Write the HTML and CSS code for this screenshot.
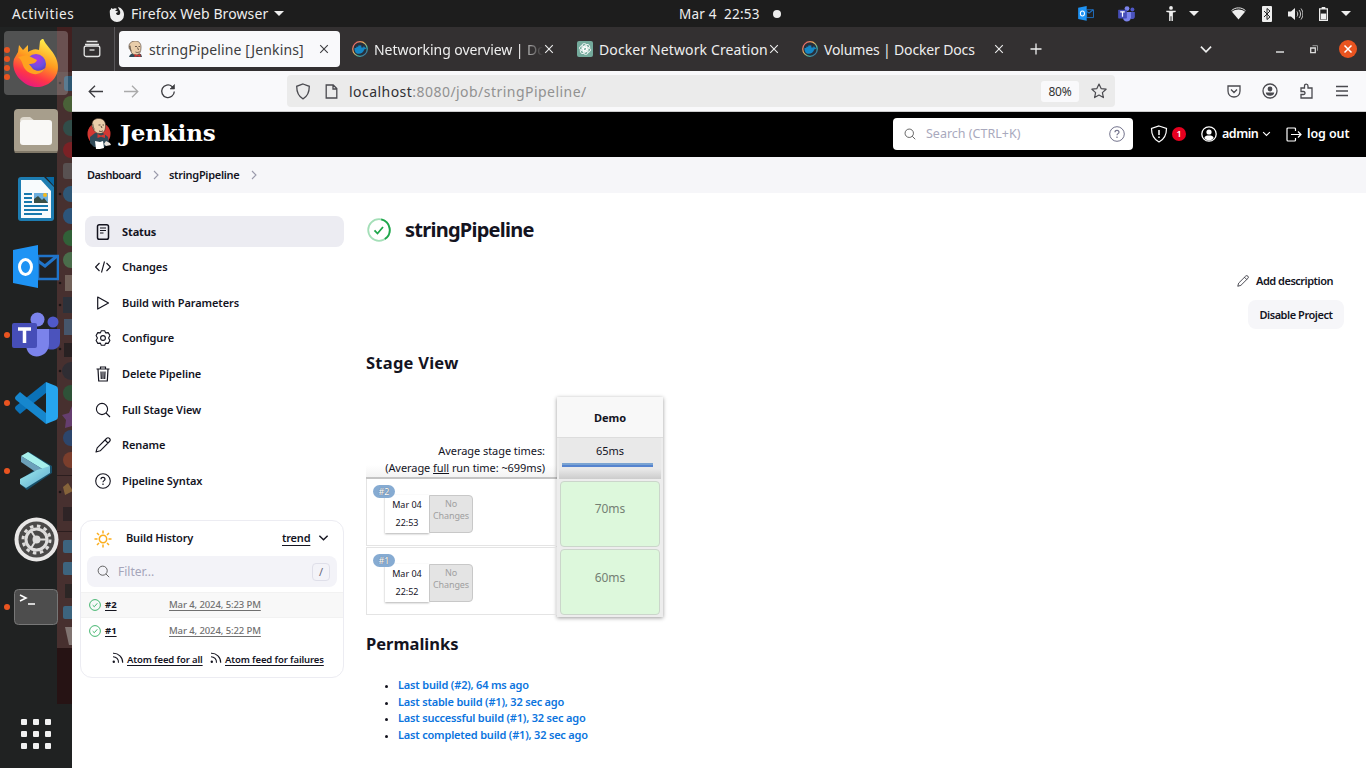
FILE: index.html
```html
<!DOCTYPE html>
<html lang="en">
<head>
<meta charset="utf-8">
<title>stringPipeline [Jenkins]</title>
<link rel="stylesheet" href="styles.css">
</head>
<body>
<svg class="defs" width="0" height="0">
  <defs>
    <linearGradient id="fox" x1=".7" y1="0" x2=".3" y2="1"><stop offset="0" stop-color="#fff44f"/><stop offset=".45" stop-color="#ff9a1f"/><stop offset=".75" stop-color="#ff3647"/><stop offset="1" stop-color="#e31587"/></linearGradient>
    <radialGradient id="globe" cx=".55" cy=".25" r=".8"><stop offset="0" stop-color="#b833e1"/><stop offset=".5" stop-color="#6d4fe0"/><stop offset="1" stop-color="#4a2fa8"/></radialGradient>
    <linearGradient id="ring" x1="0" y1="0" x2="1" y2="1"><stop offset="0" stop-color="#e0446c"/><stop offset=".4" stop-color="#f0b45c"/><stop offset=".7" stop-color="#3fb6a8"/><stop offset="1" stop-color="#3a4aa0"/></linearGradient>
    <linearGradient id="arrow" x1="0" y1="0" x2="1" y2="1"><stop offset="0" stop-color="#a5f0ee"/><stop offset="1" stop-color="#5ba7cf"/></linearGradient>
    <symbol id="docker" viewBox="0 0 16 16"><circle cx="8" cy="8" r="7.3" fill="#27303c" stroke="url(#ring)" stroke-width="1.2"/><path d="M2.500 7h1.800V5.800h2V4.500h3v2h1.500c.5 0 .8-.6.7-1.300 1 .4 1.300 1 1.400 1.500.7 0 1.200 0 1.600.3-.4.9-1.200 1.200-2.100 1.200C11.300 11.500 9.300 12.800 6.700 12.800 4 12.800 2.400 11 2.500 7z" fill="#1488c6"/></symbol>
    <symbol id="close" viewBox="0 0 10 10"><path d="M1.200 1.200l7.600 7.600M8.800 1.200L1.200 8.800" stroke="currentColor" fill="none" stroke-width="1.100"/></symbol>
    <symbol id="down" viewBox="0 0 12 8"><path d="M1.500 1.500L6 6l4.500-4.500" stroke="currentColor" fill="none" stroke-width="1.500"/></symbol>
    <symbol id="tri" viewBox="0 0 10 5"><path d="M0 0h10L5 5z" fill="currentColor"/></symbol>
    <symbol id="search" viewBox="0 0 16 16"><circle cx="7" cy="7" r="5.600" stroke="currentColor" fill="none"/><path d="M11 11l4 4" stroke="currentColor"/></symbol>
    <symbol id="pencil" viewBox="0 0 16 16"><path d="M1 15l1.200-4.200L11.500 1.500a1.900 1.900 0 0 1 3 3L5.200 13.800zM10 3l3 3" stroke="currentColor" fill="none" stroke-linejoin="round"/></symbol>
    <symbol id="help" viewBox="0 0 16 16"><circle cx="8" cy="8" r="7.300" stroke="currentColor" fill="none"/><path d="M6 6.300C6 5 6.900 4.300 8 4.300s2 .8 2 1.900c0 1.400-2 1.500-2 3M8 10.600V12" stroke="currentColor" fill="none" stroke-width="1.200"/></symbol>
    <symbol id="user" viewBox="0 0 16 16"><circle cx="8" cy="8" r="7.200" stroke="currentColor" fill="none" stroke-width="1.300"/><circle cx="8" cy="6" r="2.600" fill="currentColor"/><path d="M3.300 12c.6-1.900 2-2.500 4.700-2.500s4.100.6 4.700 2.500c-1.200 1.700-2.800 2.400-4.700 2.400S4.500 13.700 3.300 12z" fill="currentColor"/></symbol>
    <symbol id="ok" viewBox="0 0 12 12"><circle cx="6" cy="6" r="5.400" stroke="#2fae60" fill="none" stroke-width=".9"/><path d="M3.700 6.200l1.600 1.500 3-3.400" stroke="#2fae60" fill="none" stroke-width=".9"/></symbol>
    <symbol id="rss" viewBox="0 0 12 12"><circle cx="1.800" cy="9.700" r="1.200" fill="#14141f"/><path d="M1 4.700a5.500 5.500 0 0 1 5.500 6M1 1.200a9.200 9.200 0 0 1 9.700 9.500" stroke="#14141f" fill="none" stroke-width="1.100"/></symbol>
    <symbol id="outlook" viewBox="0 0 46 44"><path d="M25 11h20v23H25z" fill="#202122" stroke="#2074c9" stroke-width="2.600"/><path d="M25 16l7 5 12-10" stroke="#2074c9" fill="none" stroke-width="3"/><path d="M0 5l25-5v43L0 38z" fill="#1e93f4"/><ellipse cx="12.500" cy="22" rx="6" ry="7.500" fill="none" stroke="#fff" stroke-width="3"/></symbol>
    <symbol id="teams" viewBox="0 0 48 46"><circle cx="41" cy="10" r="5.500" fill="#5059c9"/><path d="M36 17h12v13c0 6-6 9-12 7z" fill="#4b53bc"/><circle cx="25.500" cy="7.500" r="7" fill="#7b83eb"/><path d="M14 17h23v15c0 15-23 18-23 0z" fill="#7b83eb"/><rect y="11" width="25" height="25" rx="2" fill="#464eb8"/><path d="M6 17h13M12.500 17v14" stroke="#fff" stroke-width="3.500"/></symbol>
    <symbol id="face" viewBox="0 0 16 16"><path d="M2 16c1-3 3-4 5-4l7 1 1 3z" fill="#304a58"/><path d="M2 5c0-3 3-5 6.500-5C12 0 14 2.500 14 6c0 5-1.500 8-5 8-3 0-5-2-5.500-5C2 8 2 7 2 5z" fill="#e9cdaa" stroke="#4b3a30" stroke-width=".6"/><path d="M2 5l1.500-.5L4 8l1 3-2-2z" fill="#6d5e50"/><path d="M8 5.500h2M11.500 5.500h1.500M10.500 6.500l1 2.500M8.500 11c1.500.8 3 .5 4-.3" stroke="#4b3a30" fill="none" stroke-width=".8"/><path d="M7.500 13l3 1.300 3-1.300v3l-3-.8-3 .8z" fill="#d33833"/></symbol>
    <symbol id="butler" viewBox="0 0 26 32"><circle cx="13" cy="16" r="11.500" fill="#d33833"/><path d="M4 19l5-4h8l5 4 1 7-5 3H8l-4-4z" fill="#304a58"/><path d="M10 31l-1-8 5 1 3-1 1 7-4 1z" fill="#fff"/><path d="M6 7c0-5 3-6.500 7-6.500 5 0 7 4 6.500 8 0 4-2 7-5.500 7-4 0-6-2-7-5.500C6 9 6 8 6 7z" fill="#e9cdaa" stroke="#3c2b22" stroke-width=".6"/><path d="M6 6l1.200-.5.8 4 1.500 3L7 10z" fill="#7c6d5c"/><path d="M12.500 7h2m2 0h1.500m-3 1l1 2m-3 3c1.500.8 3 .6 4-.3" stroke="#3c2b22" fill="none" stroke-width=".8"/><path d="M11.500 16l3.500 1.500 4-1.500v4l-4-1.200-3.500 1.200z" fill="#d33833"/><path d="M18 26l2-3 4 2 1 2-5 1z" fill="#e9e2dc"/></symbol>
  </defs>
</svg>

<header class="topbar">
  <span class="activities">Activities</span>
  <svg class="tb-fox" viewBox="0 0 16 16"><path d="M1 4c1 0 1-1 1-2l2 1c1-1 3-1 4 0L6 5c2 0 3 0 3 1L7 7c0 2 3 3 4 1 1-3-1-4-2-7 4 1 6 4 6 8a7 7 0 0 1-14 0c0-2-.5-3 0-5z" fill="#eee"/></svg>
  <span class="appname">Firefox Web Browser</span>
  <svg class="tb-tri"><use href="#tri"/></svg>
  <span class="clock">Mar 4&nbsp; 22:53</span><i class="notif"></i>
  <div class="tray">
    <svg class="t-out"><use href="#outlook"/></svg>
    <svg class="t-teams"><use href="#teams"/></svg>
    <svg class="t-acc" viewBox="0 0 12 16"><circle cx="6" cy="2" r="2"/><path d="M1 5h10v1.500L8 7v9H6.500v-5h-1v5H4V7L1 6.500z"/></svg>
    <svg class="t-tri"><use href="#tri"/></svg>
    <svg class="t-wifi" viewBox="0 0 16 13"><path d="M8 13L1 4.500c4-3 10-3 14 0z"/><path d="M.5 3.500c4-4 11-4 15 0" stroke="#eee" fill="none"/></svg>
    <svg class="t-bt" viewBox="0 0 10 16"><rect width="10" height="16" rx="1"/><path d="M2 5l6 6-3 2.500v-11L8 5l-6 6" stroke="#222" fill="none"/></svg>
    <svg class="t-vol" viewBox="0 0 15 14"><path d="M0 4.500h3L7 1v12L3 9.500H0z"/><path d="M9 4.500c1 1.500 1 3.500 0 5M11 3c2 2.500 2 5.500 0 8M13 1.500c2.500 3.500 2.500 7.500 0 11" stroke="#ccc" fill="none"/></svg>
    <svg class="t-bat" viewBox="0 0 10 16"><path d="M.7 2.200h8.600v13H.7zM3 1h4" fill="none" stroke="#eee" stroke-width="1.400"/><path d="M2 7.500h6V14H2z"/></svg>
    <svg class="t-tri2"><use href="#tri"/></svg>
  </div>
</header>

<div class="desktop">
  <nav class="dock">
    <svg class="strip" viewBox="0 0 15 677"><rect width="15" height="677" fill="#47302f"/><rect width="15" height="45" fill="#412020"/><rect y="621" width="15" height="56" fill="#261314"/>
      <g opacity=".7"><rect x="7" y="49" width="12" height="15" rx="3" fill="#23688f"/><circle cx="14" cy="77" r="8" fill="#4b773c"/><circle cx="14" cy="101" r="8" fill="#285a55"/><circle cx="14" cy="123" r="8" fill="#921c22"/><rect x="6" y="136" width="14" height="16" rx="3" fill="#606060"/><circle cx="14" cy="167" r="8" fill="#256894"/><circle cx="14" cy="189" r="8" fill="#22659c"/><circle cx="14" cy="211" r="8" fill="#28763d"/><circle cx="14" cy="233" r="8" fill="#4c8858"/><rect x="8" y="248" width="12" height="16" fill="#83776b"/><rect x="6" y="270" width="14" height="16" fill="#223240"/><rect x="7" y="292" width="14" height="16" fill="#466785"/><rect x="7" y="316" width="14" height="14" fill="#1c1c1d"/><circle cx="14" cy="344" r="9" fill="#252c36"/><circle cx="14" cy="366" r="8" fill="#24613d"/><path d="M5 388l7-2 3-7v20l-7 2 1-8z" fill="#73458b"/><circle cx="14" cy="411" r="8" fill="#235087"/><circle cx="14" cy="433" r="8" fill="#91442c"/><path d="M6 460l5-4 5 8-8 4z" fill="#a27b40"/><rect x="6" y="480" width="14" height="14" fill="#241f23"/><rect x="6" y="513" width="14" height="13" rx="2" fill="#397aa0"/><rect x="6" y="535" width="14" height="13" rx="2" fill="#397aa0"/><rect x="8" y="557" width="12" height="14" fill="#222"/><rect x="6" y="579" width="14" height="13" rx="2" fill="#397aa0"/><path d="M8 600h12v18h-8z" fill="#99918e"/></g>
      <path d="M0 504.500h15M0 448.500h15" stroke="#2b1d1e"/><g fill="#1b1516"><circle cx="3" cy="56" r="1.300"/><circle cx="3" cy="167" r="1.300"/><circle cx="3" cy="256" r="1.300"/><circle cx="3" cy="278" r="1.300"/><circle cx="3" cy="322" r="1.300"/><circle cx="3" cy="344" r="1.300"/><circle cx="3" cy="465" r="1.300"/></g></svg>
    <div class="app active"><span class="dots"><i></i><i></i><i></i><i></i></span><svg width="46" height="48" viewBox="0 0 46 48"><path d="M5 13l1-7 4 5 5-5v7c3-2 7-4 11-2l1-9 3-3c2 7 9 11 13 20 7 17-6 29-19 29S-3 34 1 20z" fill="url(#fox)"/><circle cx="23" cy="25" r="10" fill="url(#globe)"/><path d="M5 18l9-2 10 5c-1 3-4 4-8 4l4 5c4 3 9 2 12-1-3 8-15 8-20 1-3-4-2-8-7-12z" fill="#ffa21f"/></svg></div>
    <div class="app"><svg width="44" height="44"><rect width="44" height="44" rx="4" fill="#a79e8c"/><rect x=".5" y="42" width="43" height="2" rx="1" fill="#817969"/><path d="M6 12q0-4 4-4h6l5 4z" fill="#ded9ce"/><rect x="6" y="11" width="32" height="25" rx="3" fill="#f9f8f6"/></svg></div>
    <div class="app"><svg width="36" height="44"><path d="M3 0h23l10 10v31a3 3 0 0 1-3 3H3a3 3 0 0 1-3-3V3a3 3 0 0 1 3-3z" fill="#1d7db2"/><path d="M28 0h8v9z" fill="#0769a3"/><path d="M3 3h20l10 11v27H3z" fill="#f8fbfd"/><path d="M6 17h8M6 21h8M6 25h8M6 29h24M6 33h24M6 37h18" stroke="#1879ae" stroke-width="1.800"/><path d="M16 16h14v10H16z" fill="#6caede"/><path d="M16 26v-4l4-3 4 4 2-2 4 5z" fill="#394e45"/><circle cx="27" cy="18" r="2" fill="#f5b91d"/></svg></div>
    <div class="app"><svg width="46" height="44"><use href="#outlook"/></svg></div>
    <div class="app"><span class="dots"><i></i></span><svg width="48" height="46"><use href="#teams"/></svg></div>
    <div class="app"><span class="dots"><i></i></span><svg width="43" height="42" viewBox="0 0 43 42"><path d="M31 0v11L5 32l-4-4q-2-2 0-4z" fill="#0b72b8"/><path d="M5 10l26 21v11L1 18q-2-2 0-4z" fill="#1687ce"/><path d="M31 0l10 4q2 1 2 3v28q0 2-2 3l-10 4z" fill="#26a5ef"/></svg></div>
    <div class="app"><span class="dots"><i></i></span><svg width="34" height="38" viewBox="0 0 34 38"><path d="M3 5l7-5 23 14v7L8 38l-6-5v-6l15-10L3 10z" fill="#174f69"/><path d="M2 4l7-4 22 14-6 4z" fill="#a7f0ec"/><path d="M2 4l23 14-7 3L2 10z" fill="#6ca1ba"/><path d="M31 14v7L7 36l-6-4v-5l17-9z" fill="url(#arrow)"/></svg></div>
    <div class="app"><svg width="45" height="45" viewBox="0 0 45 45"><circle cx="22.500" cy="22.500" r="22" fill="#e9e8e7"/><circle cx="22.500" cy="22.500" r="18" fill="#4b4a49"/><circle cx="22.500" cy="22.500" r="10.500" fill="none" stroke="#dedddc" stroke-width="3"/><circle cx="22.500" cy="22.500" r="13.500" fill="none" stroke="#dedddc" stroke-width="3" stroke-dasharray="3.500 3.568"/><circle cx="22.500" cy="22.500" r="4" fill="#dedddc"/><path d="M24 22.500h9M21.500 24l-5 8M21.500 21l-5-8" stroke="#dedddc" stroke-width="2"/></svg></div>
    <div class="app"><span class="dots"><i></i></span><svg width="44" height="36"><rect x=".5" y=".5" width="43" height="35" rx="4" fill="#4d4d4d" stroke="#777"/><path d="M6 6l6 3-6 3M14 15h7" stroke="#fff" fill="none" stroke-width="1.600"/></svg></div>
    <div class="grid"><i></i><i></i><i></i><i></i><i></i><i></i><i></i><i></i><i></i></div>
  </nav>

  <div class="browser">
    <div class="tabs">
      <div class="archive"><svg width="18" height="18" viewBox="0 0 18 18" fill="none" stroke="#e5e5e5" stroke-width="1.300"><path d="M3.500 1.500h11M2 4.500h14" /><rect x="1.200" y="6" width="15.600" height="10.500" rx="2"/><path d="M6.500 10h5"/></svg></div>
      <div class="tab on"><svg class="fav"><use href="#face"/></svg><span class="tt t1">stringPipeline [Jenkins]</span><svg class="x"><use href="#close"/></svg></div>
      <div class="tab tab2"><svg class="fav"><use href="#docker"/></svg><span class="tt t2">Networking overview | Do</span><svg class="x"><use href="#close"/></svg></div>
      <div class="tab tab3"><svg class="fav" viewBox="0 0 16 16"><rect width="16" height="16" rx="2" fill="#74aa9c"/><g fill="none" stroke="#fff" stroke-width=".8"><rect x="5" y="2.500" width="4.500" height="7.500" rx="2.200"/><rect x="5" y="2.500" width="4.500" height="7.500" rx="2.200" transform="rotate(60 8 8)"/><rect x="5" y="2.500" width="4.500" height="7.500" rx="2.200" transform="rotate(120 8 8)"/><rect x="5" y="2.500" width="4.500" height="7.500" rx="2.200" transform="rotate(180 8 8)"/><rect x="5" y="2.500" width="4.500" height="7.500" rx="2.200" transform="rotate(240 8 8)"/><rect x="5" y="2.500" width="4.500" height="7.500" rx="2.200" transform="rotate(300 8 8)"/></g></svg><span class="tt t3">Docker Network Creation</span><svg class="x"><use href="#close"/></svg></div>
      <div class="tab tab4"><svg class="fav"><use href="#docker"/></svg><span class="tt t4">Volumes | Docker Docs</span><svg class="x"><use href="#close"/></svg></div>
      <svg class="plus" viewBox="0 0 12 12"><path d="M6 .5v11M.5 6h11" stroke="#eee" stroke-width="1.300"/></svg>
      <div class="win">
        <svg width="14" height="9"><use href="#down"/></svg>
        <svg class="min" width="8" height="2"><path d="M0 1h8" stroke="#ddd" stroke-width="1.500"/></svg>
        <svg class="rest" width="8" height="9"><path d="M.7 3h4.600v4.600H.7z" fill="none" stroke="#ddd" stroke-width="1.300"/><path d="M2.500.7h5v5" fill="none" stroke="#999"/></svg>
        <span class="wclose"><svg width="10" height="10" viewBox="0 0 10 10"><path d="M1.500 1.500l7 7M8.500 1.500l-7 7" stroke="#fff" stroke-width="1.500"/></svg></span>
      </div>
    </div>
    <div class="toolbar">
      <svg class="nav" width="15" height="13" viewBox="0 0 15 13"><path d="M7 .8L1.200 6.500 7 12.200M1.200 6.500H15"/></svg>
      <svg class="nav off" width="15" height="13" viewBox="0 0 15 13"><path d="M8 .8l5.800 5.700L8 12.200M13.800 6.500H0"/></svg>
      <svg class="nav" width="16" height="16" viewBox="0 0 16 16"><path d="M14.300 8.500a6.300 6.300 0 1 1-2.300-5.100l1.500 1.600"/><path d="M14.500 1.500v4.500H10z" fill="#3c3c40" stroke-width=".6"/></svg>
      <div class="url">
        <svg width="16" height="17" viewBox="0 0 16 17"><path d="M8 1l6.300 2.300c0 6-1.500 10-6.300 12.500C3.200 13.300 1.700 9.300 1.700 3.300z" fill="none" stroke="#4a4a4f" stroke-width="1.300"/></svg>
        <svg class="page" width="13" height="15" viewBox="0 0 13 15"><path d="M1.200 1h7l3.600 3.600V14H1.200zM8 1v4h4" fill="none" stroke="#4a4a4f" stroke-width="1.300"/></svg>
        <span class="addr"><b>localhost</b>:8080/job/stringPipeline/</span>
        <span class="zoom">80%</span>
        <svg width="16" height="16" viewBox="0 0 16 16"><path d="M8 1l2.100 4.600 5 .6-3.700 3.400 1 5L8 12.100l-4.400 2.500 1-5L.9 6.200l5-.6z" fill="none" stroke="#4a4a4f" stroke-width="1.200" stroke-linejoin="round"/></svg>
      </div>
      <div class="tools">
        <svg width="14" height="13" viewBox="0 0 14 13"><path d="M1 1h12v5c0 8-12 8-12 0zM4 4.500l3 3 3-3"/></svg>
        <svg width="16" height="16" viewBox="0 0 16 16"><circle cx="8" cy="8" r="7"/><circle cx="8" cy="6" r="2.400" fill="#4a4a4f" stroke="none"/><path d="M3.800 9.500h8.400c0 2-1.600 3.300-4.200 3.300s-4.200-1.300-4.200-3.300z" fill="#4a4a4f" stroke="none"/></svg>
        <svg width="16" height="16" viewBox="0 0 16 16"><path d="M2 5h3.500V3c0-2.500 3.500-2.500 3.500 0v2h4v10H2v-3.500h2.500c2 0 2-3 0-3H2z"/></svg>
        <svg width="12" height="12" viewBox="0 0 12 12"><path d="M0 1.500h12M0 6h12M0 10.500h12"/></svg>
      </div>
    </div>

    <div class="jhead">
      <svg class="logo"><use href="#butler"/></svg><span class="brand">Jenkins</span>
      <div class="jsearch"><svg width="12" height="12"><use href="#search"/></svg><span>Search (CTRL+K)</span><svg width="16" height="16" color="#73738c"><use href="#help"/></svg></div>
      <svg class="shield" width="18" height="18" viewBox="0 0 18 18"><path d="M9 1l7.500 2.500C16.500 10 14 14.500 9 17 4 14.500 1.500 10 1.500 3.500z" fill="none" stroke="#fff" stroke-width="1.200"/><path d="M9 5v5M9 11.500V13" stroke="#fff" stroke-width="1.500"/></svg>
      <span class="badge">1</span>
      <svg class="juser" width="16" height="16"><use href="#user"/></svg><span class="admin">admin</span><svg class="jdown" width="9" height="6"><use href="#down"/></svg>
      <svg class="jout" width="16" height="15" viewBox="0 0 16 15"><path d="M9.500 4V2q0-1-1-1H2Q1 1 1 2v11q0 1 1 1h6.500q1 0 1-1v-2M5 7.500h10M12 4.500l3 3-3 3" fill="none" stroke="#fff" stroke-width="1.200"/></svg><span class="logout">log out</span>
    </div>
    <div class="crumbs"><span class="c1">Dashboard</span><svg width="6" height="10"><path d="M1 1l4 4-4 4"/></svg><span class="c2">stringPipeline</span><svg width="6" height="10"><path d="M1 1l4 4-4 4"/></svg></div>

    <div class="content">
      <aside class="side">
        <div class="tasks">
          <a class="task sel"><svg viewBox="0 0 16 16"><rect x="2.500" y=".8" width="11" height="14.400" rx="1.800" stroke-width="1.500"/><path d="M5 4h6M5 6.500h6M5 9h3.500"/></svg><span class="k1">Status</span></a>
          <a class="task"><svg viewBox="0 0 16 16"><path d="M4.500 4L.6 8l3.900 4M11.500 4l3.900 4-3.900 4M9.500 2.500l-3 11"/></svg><span class="k2">Changes</span></a>
          <a class="task"><svg viewBox="0 0 16 16"><path d="M2.700 2l10.800 6-10.800 6z" stroke-linejoin="round" stroke-width="1.200"/></svg><span class="k3">Build with Parameters</span></a>
          <a class="task"><svg viewBox="0 0 16 16"><circle cx="8" cy="8" r="2.400"/><path d="M6.300.8h3.400l.9 2.100 2.600-.3 1.700 2.900L13.600 8l1.300 2.500-1.700 2.900-2.600-.3-.9 2.100H6.300l-.9-2.100-2.600.3-1.700-2.900L2.400 8 1.100 5.500l1.700-2.900 2.600.3z" stroke-linejoin="round"/></svg><span class="k4">Configure</span></a>
          <a class="task"><svg viewBox="0 0 16 16"><path d="M1.500 3h13M5.500 3V1h5v2M3 3l.7 12h8.600L13 3M6 5.500l.3 7.500M8 5.500V13M10 5.500L9.700 13" stroke-width="1.200"/></svg><span class="k5">Delete Pipeline</span></a>
          <a class="task"><svg><use href="#search"/></svg><span class="k6">Full Stage View</span></a>
          <a class="task"><svg><use href="#pencil"/></svg><span class="k7">Rename</span></a>
          <a class="task"><svg><use href="#help"/></svg><span class="k8">Pipeline Syntax</span></a>
        </div>
        <section class="history">
          <div class="hh"><svg class="sun" width="18" height="18" viewBox="0 0 18 18"><circle cx="9" cy="9" r="3.700"/><path d="M9 .5v3M9 14.500v3M.5 9h3M14.500 9h3M3 3l2 2M13 13l2 2M3 15l2-2M13 5l2-2"/></svg><span class="ht">Build History</span><a class="trend">trend</a><svg width="11" height="8"><use href="#down"/></svg></div>
          <div class="filter"><svg width="13" height="13"><use href="#search"/></svg><span>Filter...</span><kbd>/</kbd></div>
          <div class="build alt"><svg><use href="#ok"/></svg><a class="num">#2</a><a class="date">Mar 4, 2024, 5:23 PM</a></div>
          <div class="build"><svg><use href="#ok"/></svg><a class="num">#1</a><a class="date">Mar 4, 2024, 5:22 PM</a></div>
          <div class="feeds"><svg><use href="#rss"/></svg><a class="f1">Atom feed for all</a><svg><use href="#rss"/></svg><a class="f2">Atom feed for failures</a></div>
        </section>
      </aside>
      <main class="main">
        <h1><svg width="24" height="24" viewBox="0 0 24 24"><circle cx="12" cy="12" r="10.800" fill="none" stroke="#a4dfb8" stroke-width="1.800"/><path d="M12 1.200A10.800 10.800 0 0 1 19.600 19.600" transform="rotate(12 12 12)" fill="none" stroke="#1ea64b" stroke-width="1.800"/><path d="M7.500 12.300l3 3.200 5.500-6.500" fill="none" stroke="#1ea64b" stroke-width="1.800"/></svg><span>stringPipeline</span></h1>
        <div class="desc"><svg width="12" height="12"><use href="#pencil"/></svg><span>Add description</span></div>
        <div class="disable"><span>Disable Project</span></div>
        <h2 class="sv">Stage View</h2>
        <div class="stage">
          <div class="runs">
            <div class="avg"><span class="a1">Average stage times:</span><span class="a2">(Average <u>full</u> run time: ~699ms)</span></div>
            <div class="run"><span class="pill">#2</span><div class="when"><span>Mar 04</span><span>22:53</span></div><div class="nc">No<br>Changes</div></div>
            <div class="run r2"><span class="pill">#1</span><div class="when"><span>Mar 04</span><span>22:52</span></div><div class="nc">No<br>Changes</div></div>
          </div>
          <div class="demo">
            <div class="dh">Demo</div>
            <div class="da"><span>65ms</span><i></i></div>
            <div class="cell">70ms</div>
            <div class="cell">60ms</div>
          </div>
        </div>
        <h2 class="pl">Permalinks</h2>
        <ul>
          <li><a class="l1">Last build (#2), 64 ms ago</a></li>
          <li><a class="l2">Last stable build (#1), 32 sec ago</a></li>
          <li><a class="l3">Last successful build (#1), 32 sec ago</a></li>
          <li><a class="l4">Last completed build (#1), 32 sec ago</a></li>
        </ul>
      </main>
    </div>
  </div>
</div>
</body>
</html>
```
FILE: styles.css
```css
* { box-sizing: border-box; }
html, body { margin: 0; height: 768px; overflow: hidden; }
body { width: 1366px; display: flex; flex-direction: column; background: #fff; color: #14141f; font: 500 11px/16px "Noto Sans", "Open Sans", sans-serif; white-space: nowrap; }
svg { display: block; flex: none; }
.defs { position: absolute; }

/* system bar */
.topbar { height: 27px; flex: none; background: #1d1d1d; color: #eee; display: flex; align-items: center; font-size: 13.5px; font-weight: 400; }
.activities { margin-left: 12px; width: 97px; letter-spacing: .6px; }
.tb-fox { width: 16px; height: 16px; }
.appname { margin-left: 6px; width: 137px; font-size: 14px; letter-spacing: .1px; }
.tb-tri { width: 10px; height: 5px; margin-left: 6px; }
.clock { margin-left: 395px; width: 82px; letter-spacing: .2px; }
.notif { width: 8px; height: 8px; border-radius: 50%; background: #eee; margin-left: 12px; }
.tray { display: flex; align-items: center; margin-left: 297px; fill: #eee; }
.t-out { width: 16px; height: 15px; }
.t-teams { width: 17px; height: 16px; margin-left: 24px; }
.t-acc { width: 12px; height: 15px; margin-left: 30px; }
.t-tri { width: 10px; height: 5px; margin-left: 12px; }
.t-wifi { width: 15px; height: 13px; margin-left: 32px; }
.t-bt { width: 10px; height: 16px; margin-left: 16px; }
.t-vol { width: 15px; height: 14px; margin-left: 16px; }
.t-bat { width: 9px; height: 16px; margin-left: 16px; }
.t-tri2 { width: 10px; height: 5px; margin-left: 13px; }

.desktop { display: flex; height: 741px; }

/* dock */
.dock { position: relative; width: 72px; flex: none; background: #202222; display: flex; flex-direction: column; padding-top: 2px; }
.strip { position: absolute; right: 0; top: 0; width: 15px; height: 677px; }
.app { position: relative; height: 68px; flex: none; display: flex; align-items: center; justify-content: center; }
.app.active::before { content: ""; position: absolute; left: 4px; top: 2px; width: 64px; height: 64px; border-radius: 4px; background: rgba(255, 255, 255, .22); }
.app > svg { position: relative; }
.dots { position: absolute; z-index: 1; left: 4px; top: 0; height: 68px; display: flex; flex-direction: column; justify-content: center; gap: 3px; }
.dots i { width: 6px; height: 6px; border-radius: 50%; background: #e95420; }
.grid { display: grid; grid-template-columns: repeat(3, 6px); gap: 6px; margin: 78px 0 0 21px; }
.grid i { width: 6px; height: 6px; border-radius: 1px; background: #f2f2f2; }

/* browser chrome */
.browser { flex: 1; display: flex; flex-direction: column; background: #fff; }
.tabs { height: 44px; flex: none; background: #333031; display: flex; align-items: center; font-size: 14px; font-weight: 400; color: #eee; }
.archive { width: 43px; height: 44px; border-right: 1px solid #59575a; display: flex; align-items: center; justify-content: center; padding-right: 3px; margin-right: 4px; }
.tab { display: flex; align-items: center; height: 36px; }
.tab.on { width: 221px; background: #f9f9fb; color: #3d3d40; border-radius: 4px; padding-left: 8px; }
.fav { width: 16px; height: 16px; }
.tt { margin-left: 6px; line-height: 20px; padding-top: 2px; }
.x { width: 10px; height: 10px; }
.t1 { width: 170px; letter-spacing: .13px; }
.tab2 { width: 225px; padding-left: 12px; }
.t2 { width: 170px; letter-spacing: -.05px; -webkit-mask-image: linear-gradient(to right, #000 146px, transparent 169px); mask-image: linear-gradient(to right, #000 146px, transparent 169px); }
.tab3 { width: 225px; padding-left: 12px; }
.t3 { width: 170px; letter-spacing: .12px; }
.tab4 { width: 216px; padding-left: 12px; }
.t4 { width: 170px; letter-spacing: -.15px; }
.plus { width: 12px; height: 12px; margin-left: 24px; }
.win { display: flex; align-items: center; margin-left: auto; padding-right: 9px; }
.min { margin: 6px 0 0 63px; }
.rest { margin-left: 26px; }
.wclose { width: 18px; height: 18px; border-radius: 50%; background: #e95420; display: flex; align-items: center; justify-content: center; margin-left: 21px; }
.toolbar { height: 41px; flex: none; background: #f9f9fb; border-bottom: 1px solid #ccc; display: flex; align-items: center; padding-left: 16px; }
.nav { fill: none; stroke: #3c3c40; stroke-width: 1.300; margin-right: 21px; }
.nav.off { stroke: #aaa; }
.url { width: 828px; height: 32px; margin-left: 90px; background: #ebebeb; border-radius: 4px; display: flex; align-items: center; padding-left: 8px; }
.page { margin-left: 14px; }
.addr { margin-left: 11px; width: 692px; font-size: 14px; font-weight: 400; color: #919191; letter-spacing: .46px; padding-top: 1px; }
.addr b { font-weight: 400; color: #303034; }
.zoom { width: 38px; height: 21px; line-height: 21px; background: #f9f9fb; border-radius: 3px; text-align: center; font-size: 12px; font-weight: 400; letter-spacing: -.2px; margin-right: 12px; color: #333; }
.tools { display: flex; align-items: center; margin-left: 112px; gap: 21px; fill: none; stroke: #4a4a4f; stroke-width: 1.300; }

/* Jenkins header */
.jhead { height: 45px; flex: none; background: #000; color: #fff; display: flex; align-items: center; font-size: 12.5px; font-weight: 600; padding-bottom: 1px; }
.logo { width: 26px; height: 32px; margin-left: 14px; }
.brand { font: bold 23px/30px "DejaVu Serif", serif; margin: -2px 0 0 8px; width: 773px; letter-spacing: -.15px; }
.jsearch { width: 240px; height: 32px; background: #fff; border-radius: 4px; display: flex; align-items: center; padding-left: 11px; color: #333; }
.jsearch span { margin-left: 10px; width: 183px; font-size: 12.5px; font-weight: 400; color: #a9a9bd; }
.shield { margin-left: 17px; }
.badge { width: 14px; height: 14px; line-height: 14px; border-radius: 7px; background: #e6001f; text-align: center; font-size: 9px; margin-left: 4px; }
.juser { margin-left: 15px; }
.admin { margin-left: 5px; width: 37px; letter-spacing: -.5px; }
.jdown { margin-left: 3px; }
.jout { margin-left: 15px; }
.logout { margin-left: 5px; letter-spacing: -.1px; }
.crumbs { height: 36px; flex: none; background: #f6f6f9; display: flex; align-items: center; padding-left: 15px; font-weight: 600; }
.crumbs svg { fill: none; stroke: #9a9aab; stroke-width: 1.100; }
.c1 { width: 66px; letter-spacing: -.5px; }
.c2 { width: 72px; margin-left: 10px; letter-spacing: -.3px; }
.c2 + svg { margin-left: 10px; }

.content { display: flex; flex: 1; }
.side { width: 272px; padding: 23px 0 0 8px; flex: none; }
.tasks { padding-left: 5px; }
.task { display: flex; align-items: center; height: 31px; margin-bottom: 4.650px; border-radius: 8px; padding-left: 10px; font-weight: 600; letter-spacing: -.1px; }
.task.sel { background: #ececf2; font-weight: 700; }
.task svg { width: 16px; height: 16px; margin-right: 11px; fill: none; stroke: #14141f; color: #14141f; stroke-width: 1.100; }
.history { border: 1px solid #ececf2; border-radius: 12px; height: 158px; margin-top: 24px; }
.hh { height: 35px; display: flex; align-items: center; padding: 0 0 2px 13px; font-weight: 600; }
.sun { fill: none; stroke: #fbae1d; stroke-width: 1.500; margin-top: 3px; }
.ht { margin-left: 14px; width: 156px; letter-spacing: -.15px; }
.trend { text-decoration: underline; text-underline-offset: 3px; width: 36px; letter-spacing: -.2px; }
.filter { height: 31px; width: 250px; margin-left: 6px; border-radius: 8px; background: #f3f3f8; display: flex; align-items: center; padding-left: 10px; font-size: 12px; font-weight: 400; color: #a5a5ba; }
.filter svg { color: #444; }
.filter span { margin-left: 8px; width: 194px; }
.filter kbd { width: 18px; height: 18px; border: 1px solid #dfdfe9; border-radius: 4px; font: 11px/16px "Noto Sans", sans-serif; text-align: center; color: #66667a; }
.build { height: 26px; display: flex; align-items: center; padding-left: 8px; font-size: 9.500px; }
.build svg { width: 12px; height: 12px; }
.build.alt { background: #f8f8f8; margin-top: 5px; border-top: 1px solid #f2f2f2; border-bottom: 1px solid #f2f2f2; }
.num { margin-left: 4px; width: 64px; font-weight: 700; text-decoration: underline; text-underline-offset: 2px; }
.date { color: #707070; text-decoration: underline; text-underline-offset: 2px; letter-spacing: -.1px; }
.feeds { display: flex; height: 32px; align-items: center; padding-left: 31px; font-size: 9.500px; font-weight: 600; letter-spacing: -.12px; }
.feeds svg { width: 12px; height: 12px; margin-top: -4px; }
.feeds a { margin-left: 3px; text-decoration: underline; text-underline-offset: 2px; }
.f1 { width: 83px; }

/* job page */
.main { flex: 1; padding-left: 22px; display: flex; flex-direction: column; }
h1 { display: flex; align-items: center; margin: 22px 0 0; font-size: 20px; font-weight: 700; line-height: 30px; gap: 14px; }
h1 svg { margin-left: 1px; }
h1 span { letter-spacing: -.75px; }
h2 { margin: 0; font-size: 16.500px; line-height: 24px; font-weight: 700; }
.desc { display: flex; justify-content: flex-end; align-items: center; gap: 7px; padding-right: 33px; margin-top: 28px; height: 16px; font-weight: 600; letter-spacing: -.5px; }
.disable { align-self: flex-end; margin: 11px 22px 0 0; width: 96px; height: 29px; line-height: 29px; border-radius: 8px; background: #f6f6f9; text-align: center; font-weight: 600; letter-spacing: -.45px; }
.sv { margin-top: 22px; letter-spacing: .25px; }
.stage { display: flex; margin-top: 22px; height: 221px; font-weight: 400; }
.runs { width: 191px; }
.avg { height: 82px; padding: 46px 12px 0 0; display: flex; flex-direction: column; text-align: right; line-height: 16.500px; letter-spacing: -.06px; border-bottom: 2px solid #c4c4c4; background: linear-gradient(to top, #f3f3f3, #fff 12px); }
.run { position: relative; height: 67px; border: 1px solid #e4e4e4; border-top: 0; display: flex; padding: 16px 0 0 18px; }
.run.r2 { margin-top: 1px; border-top: 1px solid #e4e4e4; height: 68px; }
.pill { position: absolute; left: 6px; top: 6px; width: 22px; height: 13px; line-height: 13px; border-radius: 7px; background: #86abd2; color: #fff; font-size: 9px; text-align: center; z-index: 1; text-shadow: 0 0 1px #555; }
.when { width: 44px; height: 38px; background: #fff; box-shadow: 0 1px 2px rgba(0, 0, 0, .3); display: flex; flex-direction: column; text-align: center; font-size: 9px; line-height: 18px; padding-top: 1px; }
.nc { width: 44px; height: 38px; background: #e4e4e4; border: 1px solid #c8c8c8; border-radius: 0 4px 4px 0; color: #a0a0a0; text-align: center; font-size: 9px; line-height: 12px; padding-top: 2px; letter-spacing: -.1px; }
.demo { width: 106px; height: 220px; background: #ededed; box-shadow: 0 1px 4px rgba(0, 0, 0, .4); padding: 0 2px; font-size: 11px; text-align: center; }
.dh { height: 41px; line-height: 41px; background: #f8f8f8; margin: 0 -2px; font-weight: 700; border-bottom: 1px solid #ddd; }
.da { height: 41px; padding-top: 5px; background: linear-gradient(#e9e9e9 75%, #ccc); }
.da i { display: block; width: 91px; height: 4px; margin: 4px 0 0 3px; background: linear-gradient(#7ba4d2 50%, #5684cf 50%); }
.cell { height: 66px; margin: 2px 1px 0; border: 1px solid #cbd6cb; border-radius: 4px; background: #ddf8dc; color: #748074; line-height: 54px; font-size: 12px; }
.cell + .cell { margin-top: 2px; line-height: 55px; }
.pl { margin-top: 14px; }
ul { margin: 21px 0 0; padding: 0 0 0 32px; line-height: 16.700px; }
li::marker { font-size: 9px; }
li a { color: #0b74de; font-weight: 600; letter-spacing: -.2px; }
```
